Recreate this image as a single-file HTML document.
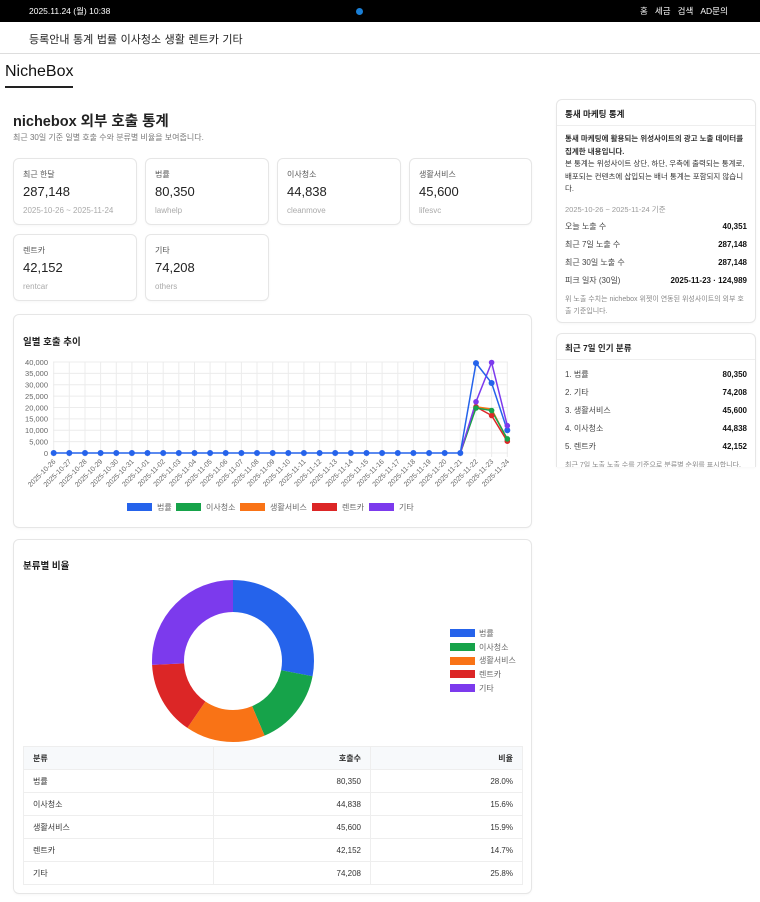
<!DOCTYPE html>
<html><head><meta charset="utf-8"><style>
*{box-sizing:border-box;margin:0;padding:0}
body{width:760px;height:902px;overflow:hidden;background:#fff;font-family:"Liberation Sans","Noto Sans CJK KR",sans-serif;color:#222;position:relative}
.a{position:absolute;white-space:nowrap}
.top{position:absolute;left:0;top:0;width:760px;height:22px;background:#000;color:#fff;font-size:8.5px}
.nav{position:absolute;left:0;top:22px;width:760px;height:32px;border-bottom:1px solid #ddd;font-size:11px}
.card{position:absolute;border:1px solid #e6e6e6;border-radius:6px;background:#fff;box-shadow:0 1px 2px rgba(0,0,0,.03)}
.st .l{font-size:8px;color:#555;position:absolute;left:9px;top:10px}
.st .v{font-size:13px;color:#222;position:absolute;left:9px;top:25px}
.st .s{font-size:8px;color:#aaa;position:absolute;left:9px;top:47px}
.row{display:flex;justify-content:space-between;font-size:8px;color:#444;height:18px;align-items:center}
.row b{color:#111}
table{position:absolute;left:23px;top:746px;width:500px;border-collapse:collapse;font-size:8px;color:#333}
td,th{border:1px solid #eee;height:23px;padding:0 9px}
th{background:#f7f9fb;font-weight:bold;text-align:left}
.r{text-align:right}
</style></head><body>
<div class="top"><span class="a" style="left:29px;top:5px">2025.11.24 (월) 10:38</span>
<span class="a" style="left:356px;top:8px;width:7px;height:7px;border-radius:50%;background:#1a7fd6"></span>
<span class="a" style="left:640px;top:5px">홈&nbsp;&nbsp;&nbsp;세금&nbsp;&nbsp;&nbsp;검색&nbsp;&nbsp;&nbsp;AD문의</span></div>
<div class="nav"><span class="a" style="left:29px;top:9px;word-spacing:0.5px">등록안내 통계 법률 이사청소 생활 렌트카 기타</span></div>
<div class="a" style="left:5px;top:63px;font-size:16px;color:#111">NicheBox</div>
<div class="a" style="left:5px;top:86px;width:68px;height:2px;background:#222"></div>
<div class="a" style="left:13px;top:110px;font-size:14.5px;font-weight:bold;color:#222">nichebox 외부 호출 통계</div>
<div class="a" style="left:13px;top:132px;font-size:8px;color:#777">최근 30일 기준 일별 호출 수와 분류별 비율을 보여줍니다.</div>

<div class="card st" style="left:13px;top:158px;width:124px;height:67px"><div class="l">최근 한달</div><div class="v">287,148</div><div class="s">2025-10-26 ~ 2025-11-24</div></div>
<div class="card st" style="left:145px;top:158px;width:124px;height:67px"><div class="l">법률</div><div class="v">80,350</div><div class="s">lawhelp</div></div>
<div class="card st" style="left:277px;top:158px;width:124px;height:67px"><div class="l">이사청소</div><div class="v">44,838</div><div class="s">cleanmove</div></div>
<div class="card st" style="left:409px;top:158px;width:123px;height:67px"><div class="l">생활서비스</div><div class="v">45,600</div><div class="s">lifesvc</div></div>
<div class="card st" style="left:13px;top:234px;width:124px;height:67px"><div class="l">렌트카</div><div class="v">42,152</div><div class="s">rentcar</div></div>
<div class="card st" style="left:145px;top:234px;width:124px;height:67px"><div class="l">기타</div><div class="v">74,208</div><div class="s">others</div></div>

<div class="card" style="left:13px;top:314px;width:519px;height:214px"></div>
<div class="a" style="left:23px;top:334px;font-size:9.5px;font-weight:bold">일별 호출 추이</div>
<svg class="a" style="left:0;top:0" width="540" height="530" font-family="Liberation Sans" font-size="7.5" fill="#666">
<g stroke="#ececec" stroke-width="1">
<line x1="53" y1="362" x2="508" y2="362"/><line x1="53" y1="373.4" x2="508" y2="373.4"/><line x1="53" y1="384.8" x2="508" y2="384.8"/><line x1="53" y1="396.1" x2="508" y2="396.1"/><line x1="53" y1="407.5" x2="508" y2="407.5"/><line x1="53" y1="418.9" x2="508" y2="418.9"/><line x1="53" y1="430.3" x2="508" y2="430.3"/><line x1="53" y1="441.6" x2="508" y2="441.6"/><line x1="53" y1="453" x2="508" y2="453"/>
<path d="M53.7 362V457M69.3 362V457M85 362V457M100.6 362V457M116.3 362V457M131.9 362V457M147.5 362V457M163.2 362V457M178.8 362V457M194.5 362V457M210.1 362V457M225.7 362V457M241.4 362V457M257 362V457M272.7 362V457M288.3 362V457M303.9 362V457M319.6 362V457M335.2 362V457M350.9 362V457M366.5 362V457M382.1 362V457M397.8 362V457M413.4 362V457M429.1 362V457M444.7 362V457M460.3 362V457M476 362V457M491.6 362V457M507.3 362V457"/>
</g>
<g text-anchor="end">
<text x="48" y="365">40,000</text><text x="48" y="376">35,000</text><text x="48" y="387.5">30,000</text><text x="48" y="399">25,000</text><text x="48" y="410.5">20,000</text><text x="48" y="421.5">15,000</text><text x="48" y="433">10,000</text><text x="48" y="444.5">5,000</text><text x="48" y="456">0</text>
</g>
<g text-anchor="end" font-size="7">
<text transform="translate(56,462) rotate(-45)">2025-10-26</text><text transform="translate(71.6,462) rotate(-45)">2025-10-27</text><text transform="translate(87.3,462) rotate(-45)">2025-10-28</text><text transform="translate(102.9,462) rotate(-45)">2025-10-29</text><text transform="translate(118.6,462) rotate(-45)">2025-10-30</text><text transform="translate(134.2,462) rotate(-45)">2025-10-31</text><text transform="translate(149.8,462) rotate(-45)">2025-11-01</text><text transform="translate(165.5,462) rotate(-45)">2025-11-02</text><text transform="translate(181.1,462) rotate(-45)">2025-11-03</text><text transform="translate(196.8,462) rotate(-45)">2025-11-04</text><text transform="translate(212.4,462) rotate(-45)">2025-11-05</text><text transform="translate(228,462) rotate(-45)">2025-11-06</text><text transform="translate(243.7,462) rotate(-45)">2025-11-07</text><text transform="translate(259.3,462) rotate(-45)">2025-11-08</text><text transform="translate(275,462) rotate(-45)">2025-11-09</text><text transform="translate(290.6,462) rotate(-45)">2025-11-10</text><text transform="translate(306.2,462) rotate(-45)">2025-11-11</text><text transform="translate(321.9,462) rotate(-45)">2025-11-12</text><text transform="translate(337.5,462) rotate(-45)">2025-11-13</text><text transform="translate(353.2,462) rotate(-45)">2025-11-14</text><text transform="translate(368.8,462) rotate(-45)">2025-11-15</text><text transform="translate(384.4,462) rotate(-45)">2025-11-16</text><text transform="translate(400.1,462) rotate(-45)">2025-11-17</text><text transform="translate(415.7,462) rotate(-45)">2025-11-18</text><text transform="translate(431.4,462) rotate(-45)">2025-11-19</text><text transform="translate(447,462) rotate(-45)">2025-11-20</text><text transform="translate(462.6,462) rotate(-45)">2025-11-21</text><text transform="translate(478.3,462) rotate(-45)">2025-11-22</text><text transform="translate(493.9,462) rotate(-45)">2025-11-23</text><text transform="translate(509.6,462) rotate(-45)">2025-11-24</text>
</g>
<g fill="none" stroke-width="1.5">
<polyline stroke="#dc2626" points="460.3,453 476,406.8 491.6,415.5 507.3,441.2"/>
<polyline stroke="#f97316" points="460.3,453 476,406.8 491.6,409.1 507.3,439.3"/>
<polyline stroke="#16a34a" points="460.3,453 476,408 491.6,410.5 507.3,438.9"/>
<polyline stroke="#7c3aed" points="460.3,453 476,401.8 491.6,362.5 507.3,425.7"/>
<polyline stroke="#2563eb" points="53.7,453 460.3,453 476,363.1 491.6,383 507.3,430.3"/>
</g>
<g fill="#2563eb">
<circle cx="53.7" cy="453" r="3"/><circle cx="69.3" cy="453" r="3"/><circle cx="85" cy="453" r="3"/><circle cx="100.6" cy="453" r="3"/><circle cx="116.3" cy="453" r="3"/><circle cx="131.9" cy="453" r="3"/><circle cx="147.5" cy="453" r="3"/><circle cx="163.2" cy="453" r="3"/><circle cx="178.8" cy="453" r="3"/><circle cx="194.5" cy="453" r="3"/><circle cx="210.1" cy="453" r="3"/><circle cx="225.7" cy="453" r="3"/><circle cx="241.4" cy="453" r="3"/><circle cx="257" cy="453" r="3"/><circle cx="272.7" cy="453" r="3"/><circle cx="288.3" cy="453" r="3"/><circle cx="303.9" cy="453" r="3"/><circle cx="319.6" cy="453" r="3"/><circle cx="335.2" cy="453" r="3"/><circle cx="350.9" cy="453" r="3"/><circle cx="366.5" cy="453" r="3"/><circle cx="382.1" cy="453" r="3"/><circle cx="397.8" cy="453" r="3"/><circle cx="413.4" cy="453" r="3"/><circle cx="429.1" cy="453" r="3"/><circle cx="444.7" cy="453" r="3"/><circle cx="460.3" cy="453" r="3"/>
<circle cx="476" cy="363.1" r="3"/><circle cx="491.6" cy="383" r="3"/><circle cx="507.3" cy="430.3" r="3"/></g>
<g fill="#dc2626"><circle cx="476" cy="406.8" r="2.8"/><circle cx="491.6" cy="415.5" r="2.8"/><circle cx="507.3" cy="441.2" r="2.8"/></g>
<g fill="#16a34a"><circle cx="476" cy="408" r="2.8"/><circle cx="491.6" cy="410.5" r="2.8"/><circle cx="507.3" cy="438.9" r="2.8"/></g>
<g fill="#7c3aed"><circle cx="476" cy="401.8" r="2.8"/><circle cx="491.6" cy="362.5" r="2.8"/><circle cx="507.3" cy="425.7" r="2.8"/></g>
<g font-size="8" fill="#666">
<rect x="127" y="503" width="25" height="8" fill="#2563eb"/><text x="157" y="510">법률</text>
<rect x="176" y="503" width="25" height="8" fill="#16a34a"/><text x="206" y="510">이사청소</text>
<rect x="240" y="503" width="25" height="8" fill="#f97316"/><text x="270" y="510">생활서비스</text>
<rect x="312" y="503" width="25" height="8" fill="#dc2626"/><text x="342" y="510">렌트카</text>
<rect x="369" y="503" width="25" height="8" fill="#7c3aed"/><text x="399" y="510">기타</text>
</g>
</svg>

<div class="card" style="left:13px;top:539px;width:519px;height:355px"></div>
<div class="a" style="left:23px;top:558px;font-size:9.5px;font-weight:bold">분류별 비율</div>
<svg class="a" style="left:0;top:540px" width="540" height="210" font-family="Liberation Sans, Noto Sans CJK KR" font-size="8" fill="#666">
<g transform="rotate(-90 233 121)" fill="none" stroke-width="32">
<circle cx="233" cy="121" r="65" stroke="#2563eb" stroke-dasharray="114.4 408.4" stroke-dashoffset="0"/>
<circle cx="233" cy="121" r="65" stroke="#16a34a" stroke-dasharray="63.7 408.4" stroke-dashoffset="-114.4"/>
<circle cx="233" cy="121" r="65" stroke="#f97316" stroke-dasharray="64.9 408.4" stroke-dashoffset="-178.1"/>
<circle cx="233" cy="121" r="65" stroke="#dc2626" stroke-dasharray="60 408.4" stroke-dashoffset="-243"/>
<circle cx="233" cy="121" r="65" stroke="#7c3aed" stroke-dasharray="105.4 408.4" stroke-dashoffset="-303"/>
</g>
<rect x="450" y="89" width="25" height="8" fill="#2563eb"/><text x="479" y="96">법률</text>
<rect x="450" y="103" width="25" height="8" fill="#16a34a"/><text x="479" y="110">이사청소</text>
<rect x="450" y="117" width="25" height="8" fill="#f97316"/><text x="479" y="123">생활서비스</text>
<rect x="450" y="130" width="25" height="8" fill="#dc2626"/><text x="479" y="137">렌트카</text>
<rect x="450" y="144" width="25" height="8" fill="#7c3aed"/><text x="479" y="151">기타</text>
</svg>
<table>
<tr><th style="width:190px">분류</th><th class="r" style="width:157px">호출수</th><th class="r">비율</th></tr>
<tr><td>법률</td><td class="r">80,350</td><td class="r">28.0%</td></tr>
<tr><td>이사청소</td><td class="r">44,838</td><td class="r">15.6%</td></tr>
<tr><td>생활서비스</td><td class="r">45,600</td><td class="r">15.9%</td></tr>
<tr><td>렌트카</td><td class="r">42,152</td><td class="r">14.7%</td></tr>
<tr><td>기타</td><td class="r">74,208</td><td class="r">25.8%</td></tr>
</table>

<div class="card" style="left:556px;top:99px;width:200px;height:224px;overflow:hidden">
<div style="height:26px;border-bottom:1px solid #eee;font-size:8.5px;font-weight:bold;padding:8px 0 0 8px">통새 마케팅 통계</div>
<div style="padding:7px 8px 0 8px">
<div style="font-size:7.5px;line-height:12.5px;color:#333"><b>통새 마케팅에 활용되는 위성사이트의 광고 노출 데이터를 집계한 내용입니다.</b><br>본 통계는 위성사이트 상단, 하단, 우측에 출력되는 통계로, 배포되는 컨텐츠에 삽입되는 배너 통계는 포함되지 않습니다.</div>
<div style="font-size:7.5px;color:#999;margin:8px 0 3px">2025-10-26 ~ 2025-11-24 기준</div>
<div class="row"><span>오늘 노출 수</span><b>40,351</b></div>
<div class="row"><span>최근 7일 노출 수</span><b>287,148</b></div>
<div class="row"><span>최근 30일 노출 수</span><b>287,148</b></div>
<div class="row"><span>피크 일자 (30일)</span><b>2025-11-23 · 124,989</b></div>
<div style="font-size:7px;color:#888;line-height:12.5px;margin-top:4px">위 노출 수치는 nichebox 위젯이 연동된 위성사이트의 외부 호출 기준입니다.</div>
</div></div>

<div class="card" style="left:556px;top:333px;width:200px;height:134px;overflow:hidden;border-bottom:none;border-radius:6px 6px 0 0">
<div style="height:26px;border-bottom:1px solid #eee;font-size:8.5px;font-weight:bold;padding:8px 0 0 8px">최근 7일 인기 분류</div>
<div style="padding:5px 8px 0 8px">
<div class="row"><span>1. 법률</span><b>80,350</b></div>
<div class="row"><span>2. 기타</span><b>74,208</b></div>
<div class="row"><span>3. 생활서비스</span><b>45,600</b></div>
<div class="row"><span>4. 이사청소</span><b>44,838</b></div>
<div class="row"><span>5. 렌트카</span><b>42,152</b></div>
<div style="font-size:7px;color:#888;margin-top:5px">최근 7일 노출 노출 수를 기준으로 분류별 순위를 표시합니다.</div>
</div></div>
</body></html>
